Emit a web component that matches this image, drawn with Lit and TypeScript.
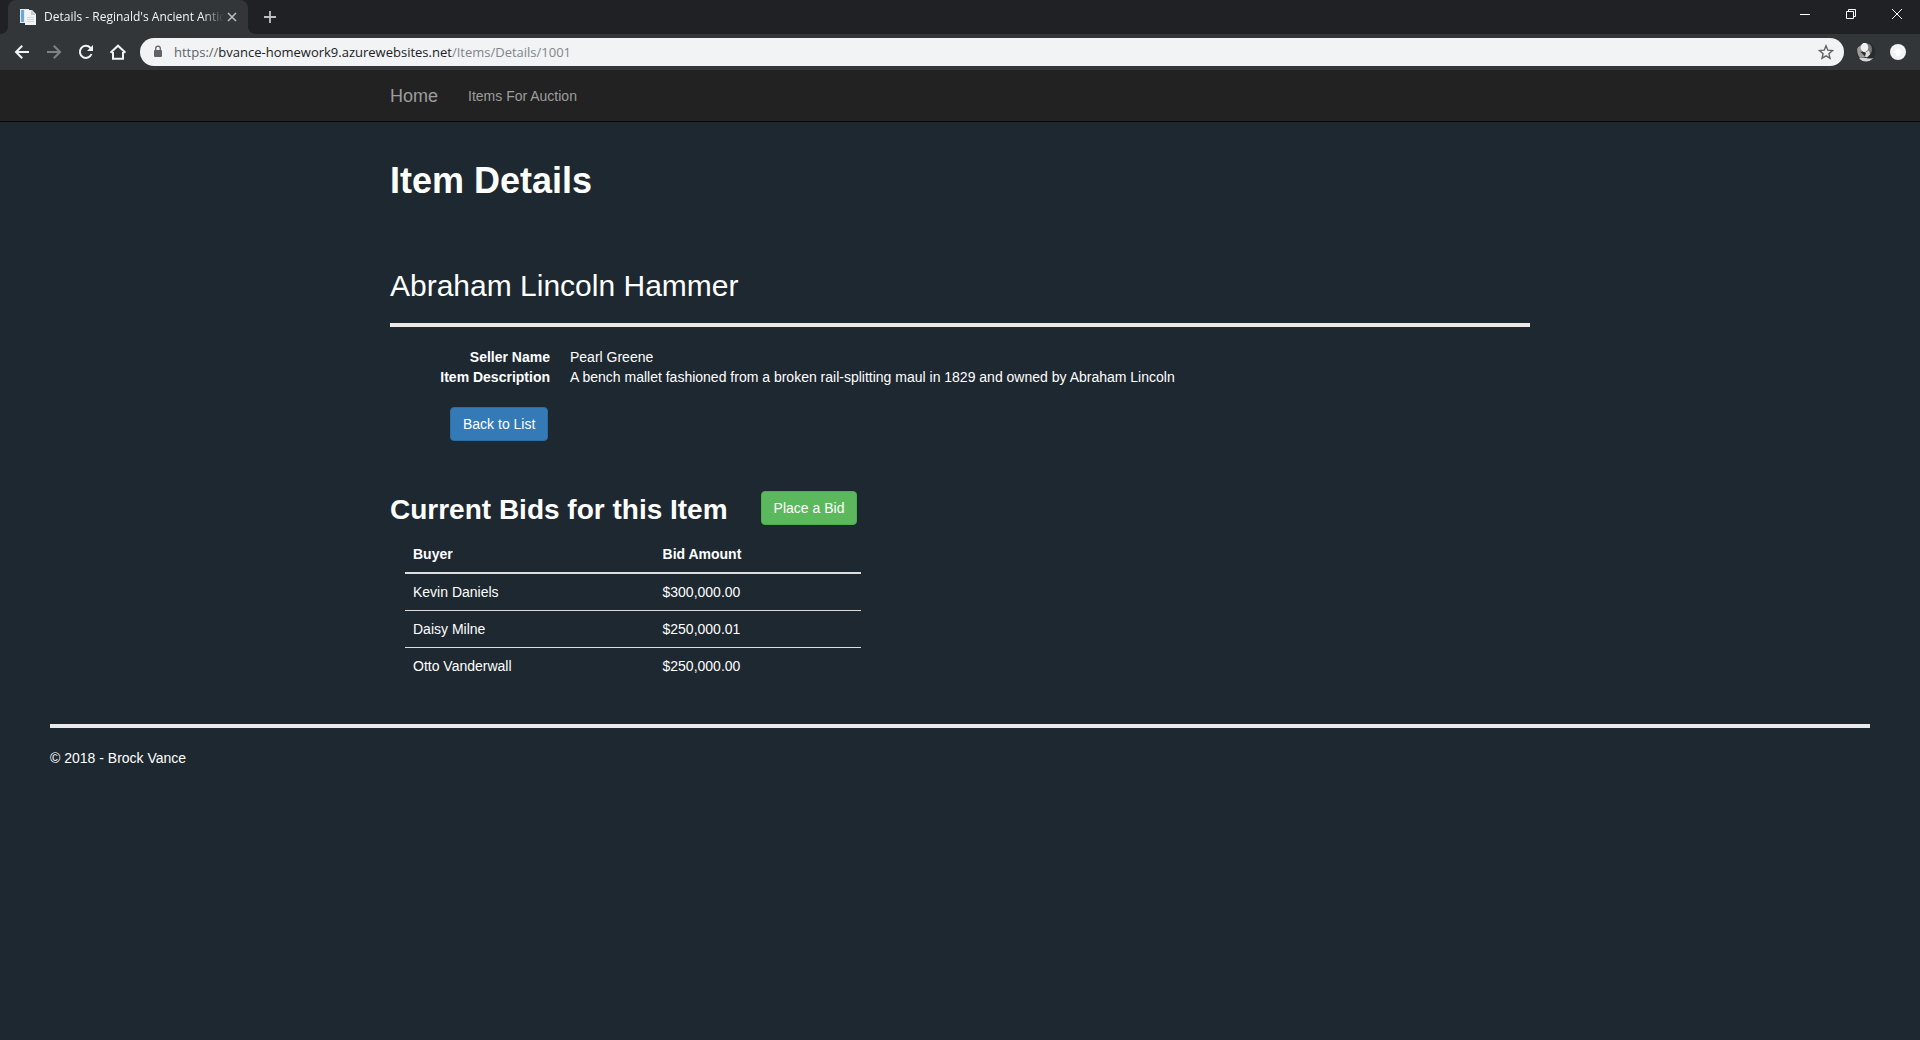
import { LitElement, html, css } from "lit";
import { customElement } from "lit/decorators.js";

@customElement("browser-chrome")
class BrowserChrome extends LitElement {
  static styles = css`
    :host {
      display: block;
      font-family: "Open Sans", "Noto Sans", sans-serif;
      background: #202124;
    }
    button {
      border: 0;
      padding: 0;
      margin: 0;
      background: none;
      display: flex;
      align-items: center;
      justify-content: center;
      cursor: pointer;
    }
    svg {
      display: block;
      flex: none;
    }
    .strip {
      display: flex;
      align-items: flex-end;
      height: 34px;
    }
    .corner {
      flex: none;
      width: 8px;
      height: 34px;
    }
    .corner-left {
      background: radial-gradient(circle at 0 0, #202124 8px, #323639 8px) bottom / 8px 8px no-repeat;
    }
    .corner-right {
      background: radial-gradient(circle at 100% 0, #202124 8px, #323639 8px) bottom / 8px 8px no-repeat;
    }
    .tab {
      display: flex;
      align-items: center;
      box-sizing: border-box;
      width: 240px;
      height: 34px;
      padding: 0 8px 0 12px;
      border-radius: 8px 8px 0 0;
      background: #323639;
    }
    .title {
      flex: 1;
      margin-left: 8px;
      overflow: hidden;
      white-space: nowrap;
      color: #f1f3f4;
      font-size: 12px;
      line-height: 16px;
      mask-image: linear-gradient(90deg, #000 88%, transparent 100%);
    }
    .new-tab {
      width: 28px;
      height: 34px;
    }
    .window {
      display: flex;
      margin-left: auto;
      height: 28px;
      align-self: flex-start;
    }
    .window button {
      width: 46px;
      height: 28px;
    }
    .toolbar {
      display: flex;
      align-items: center;
      height: 36px;
      padding: 0 6px;
      background: #323639;
    }
    .toolbar > button {
      width: 32px;
      height: 36px;
    }
    .omnibox {
      flex: 1;
      display: flex;
      align-items: center;
      height: 28px;
      margin: 0 6px;
      padding: 0 10px 0 12px;
      gap: 10px;
      border-radius: 14px;
      background: #f1f3f4;
    }
    .url {
      flex: 1;
      font-size: 13px;
      line-height: 20px;
      color: #80868b;
      white-space: nowrap;
    }
    .host {
      color: #202124;
    }
    .scheme {
      color: #5f6368;
    }
  `;

  render() {
    return html`
      <div class="strip">
        <span class="corner corner-left"></span>
        <div class="tab">
          <svg width="16" height="16" viewBox="0 0 16 16" aria-hidden="true">
            <path d="M0 0h9v14H0z" fill="#dfe9f2" />
            <path d="M1 1h3v12H1z" fill="#6aa7dc" />
            <path d="M5 1h7l4 4v11H5z" fill="#f3f3f3" />
            <path d="M11 1v5h5z" fill="#c4cbd2" />
            <path d="M7 8.500h7M7 10.500h7M7 12.500h7" stroke="#d2d6da" />
          </svg>
          <span class="title">Details - Reginald's Ancient Antiq</span>
          <button aria-label="Close tab">
            <svg width="16" height="16" viewBox="0 0 16 16">
              <path d="M4 4l8 8M12 4l-8 8" stroke="#bdc1c6" stroke-width="1.500" />
            </svg>
          </button>
        </div>
        <span class="corner corner-right"></span>
        <button class="new-tab" aria-label="New tab">
          <svg width="14" height="14" viewBox="0 0 14 14">
            <path d="M7 1v12M1 7h12" stroke="#bdc1c6" stroke-width="1.800" />
          </svg>
        </button>
        <div class="window">
          <button aria-label="Minimize">
            <svg width="10" height="10" viewBox="0 0 10 10"><path d="M0 5.500h10" stroke="#fff" /></svg>
          </button>
          <button aria-label="Restore">
            <svg width="10" height="10" viewBox="0 0 10 10">
              <path d="M.5 2.500h7v7h-7zM2.500 2.500v-2h7v7h-2" fill="none" stroke="#fff" />
            </svg>
          </button>
          <button aria-label="Close">
            <svg width="10" height="10" viewBox="0 0 10 10">
              <path d="M0 0l10 10M10 0L0 10" stroke="#fff" />
            </svg>
          </button>
        </div>
      </div>
      <div class="toolbar">
        <button aria-label="Back">
          <svg width="16" height="16" viewBox="0 0 16 16">
            <path d="M15 8H2.500M8.200 1.800L2 8l6.200 6.200" fill="none" stroke="#f1f3f4" stroke-width="2" />
          </svg>
        </button>
        <button aria-label="Forward" disabled>
          <svg width="16" height="16" viewBox="0 0 16 16">
            <path d="M1 8h12.500M7.800 1.800L14 8l-6.200 6.200" fill="none" stroke="#808386" stroke-width="2" />
          </svg>
        </button>
        <button aria-label="Reload">
          <svg width="16" height="16" viewBox="0 0 16 16">
            <path d="M13.500 10A6 6 0 1 1 12.300 3.800L14 5.500" fill="none" stroke="#f1f3f4" stroke-width="2" />
            <path d="M15 1v6H9z" fill="#f1f3f4" />
          </svg>
        </button>
        <button aria-label="Home page">
          <svg width="18" height="16" viewBox="0 0 18 16">
            <path d="M1.500 8.700L9 1.700l7.500 7M4 8v6.800h10V8" fill="none" stroke="#f1f3f4" stroke-width="2" />
          </svg>
        </button>
        <div class="omnibox">
          <svg width="12" height="14" viewBox="0 0 12 14" aria-hidden="true">
            <rect x="2" y="5" width="8" height="7" rx="1" fill="#5f6368" />
            <path d="M3.700 5.500V3.500a2.300 2.300 0 0 1 4.600 0v2" fill="none" stroke="#5f6368" stroke-width="1.300" />
          </svg>
          <span class="url"
            ><span class="scheme">https://</span><span class="host">bvance-homework9.azurewebsites.net</span>/Items/Details/1001</span
          >
          <button aria-label="Bookmark this page">
            <svg width="16" height="16" viewBox="0 0 16 16">
              <path
                d="M8 1.800l1.800 4.400 4.700.4-3.600 3.100 1.100 4.600L8 11.800l-4 2.500 1.100-4.600L1.500 6.600l4.700-.4z"
                fill="none"
                stroke="#5f6368"
                stroke-width="1.400"
              />
            </svg>
          </button>
        </div>
        <button aria-label="Profile">
          <svg width="20" height="20" viewBox="0 0 20 20">
            <defs><clipPath id="face"><circle cx="10" cy="10" r="9.500" /></clipPath></defs>
            <g clip-path="url(#face)">
              <rect width="20" height="20" fill="#2a2a2b" />
              <path d="M10 1q6 1 6 6t-4 7z" fill="#77797a" />
              <path d="M1 6l4-3 1 7 4 5-6 1q-3-3-3-10z" fill="#9c9c9c" />
              <ellipse cx="8.500" cy="5.500" rx="3.800" ry="4.700" fill="#f0f0f0" />
              <path d="M9 10.500l4-2 1 4-3 3-2-1z" fill="#ddd" />
              <path d="M4 9.500l6 1.500-1 3.500z" fill="#303030" />
              <path d="M2 17q4-2 8-1t7 0l-2 4H4z" fill="#d6d6d6" />
            </g>
          </svg>
        </button>
        <button aria-label="Update available">
          <svg width="16" height="16" viewBox="0 0 16 16">
            <circle cx="8" cy="8" r="8" fill="#f1f3f4" />
            <path d="M8 4l4.500 4.500H10V12H6V8.500H3.500z" fill="#fff" />
          </svg>
        </button>
      </div>
    `;
  }
}

interface Bid {
  buyer: string;
  amount: string;
}

@customElement("app-root")
class AppRoot extends LitElement {
  private bids: Bid[] = [
    { buyer: "Kevin Daniels", amount: "$300,000.00" },
    { buyer: "Daisy Milne", amount: "$250,000.01" },
    { buyer: "Otto Vanderwall", amount: "$250,000.00" },
  ];

  static styles = css`
    :host {
      display: block;
      min-height: 100vh;
      background: #1e2831;
      color: #fff;
      font-family: "Liberation Sans", Arial, sans-serif;
      font-size: 14px;
      line-height: 20px;
    }
    h1,
    h2,
    h3,
    dl,
    dd,
    p {
      margin: 0;
    }
    .navbar {
      background: #222;
      border-bottom: 1px solid #080808;
    }
    .container {
      box-sizing: border-box;
      max-width: 1170px;
      margin: 0 auto;
      padding: 0 15px;
    }
    .links {
      display: flex;
      align-items: center;
      gap: 30px;
      min-height: 51px;
    }
    .links a {
      color: #9d9d9d;
      text-decoration: none;
    }
    .links .brand {
      font-size: 18px;
    }
    .content {
      padding-top: 39px;
    }
    h1 {
      font-size: 36px;
      line-height: 40px;
    }
    h2 {
      margin-top: 68px;
      font-size: 30px;
      line-height: 34px;
      font-weight: 400;
    }
    hr {
      margin: 20px 0;
      border: 0;
      border-top: 4px solid #eae8e8;
    }
    dl {
      display: grid;
      grid-template-columns: 160px 1fr;
      column-gap: 20px;
    }
    dt {
      font-weight: 700;
      text-align: right;
    }
    .btn {
      display: inline-block;
      padding: 6px 12px;
      border: 1px solid;
      border-radius: 4px;
      color: #fff;
      text-decoration: none;
    }
    .primary {
      background: #337ab7;
      border-color: #2e6da4;
    }
    .success {
      background: #5cb85c;
      border-color: #4cae4c;
    }
    .back {
      margin: 20px 0 50px 60px;
    }
    .back .btn {
      display: block;
      width: fit-content;
    }
    .bids {
      display: flex;
      align-items: flex-end;
      gap: 33px;
    }
    h3 {
      font-size: 28px;
      line-height: 30px;
    }
    table {
      width: 40%;
      min-width: 320px;
      margin: 11px 0 40px 15px;
      border-collapse: separate;
      border-spacing: 0;
    }
    th,
    td {
      padding: 8px;
      text-align: left;
      border-top: 1px solid #ddd;
    }
    th {
      border-top: 0;
      border-bottom: 2px solid #ddd;
    }
    tbody tr:first-child td {
      border-top: 0;
    }
    footer {
      padding: 0 50px 20px;
    }
  `;

  render() {
    return html`
      <browser-chrome></browser-chrome>
      <nav class="navbar">
        <div class="container links">
          <a class="brand" href="#home">Home</a>
          <a href="#items">Items For Auction</a>
        </div>
      </nav>
      <main class="container content">
        <h1>Item Details</h1>
        <h2>Abraham Lincoln Hammer</h2>
        <hr />
        <dl>
          <dt>Seller Name</dt>
          <dd>Pearl Greene</dd>
          <dt>Item Description</dt>
          <dd>A bench mallet fashioned from a broken rail-splitting maul in 1829 and owned by Abraham Lincoln</dd>
        </dl>
        <p class="back"><a class="btn primary" href="#items">Back to List</a></p>
        <div class="bids">
          <h3>Current Bids for this Item</h3>
          <a class="btn success" href="#bid">Place a Bid</a>
        </div>
        <table>
          <thead>
            <tr>
              <th scope="col">Buyer</th>
              <th scope="col">Bid Amount</th>
            </tr>
          </thead>
          <tbody>
            ${this.bids.map(
              (bid) => html`<tr>
                <td>${bid.buyer}</td>
                <td>${bid.amount}</td>
              </tr>`
            )}
          </tbody>
        </table>
      </main>
      <footer>
        <hr />
        <p>© 2018 - Brock Vance</p>
      </footer>
    `;
  }
}
